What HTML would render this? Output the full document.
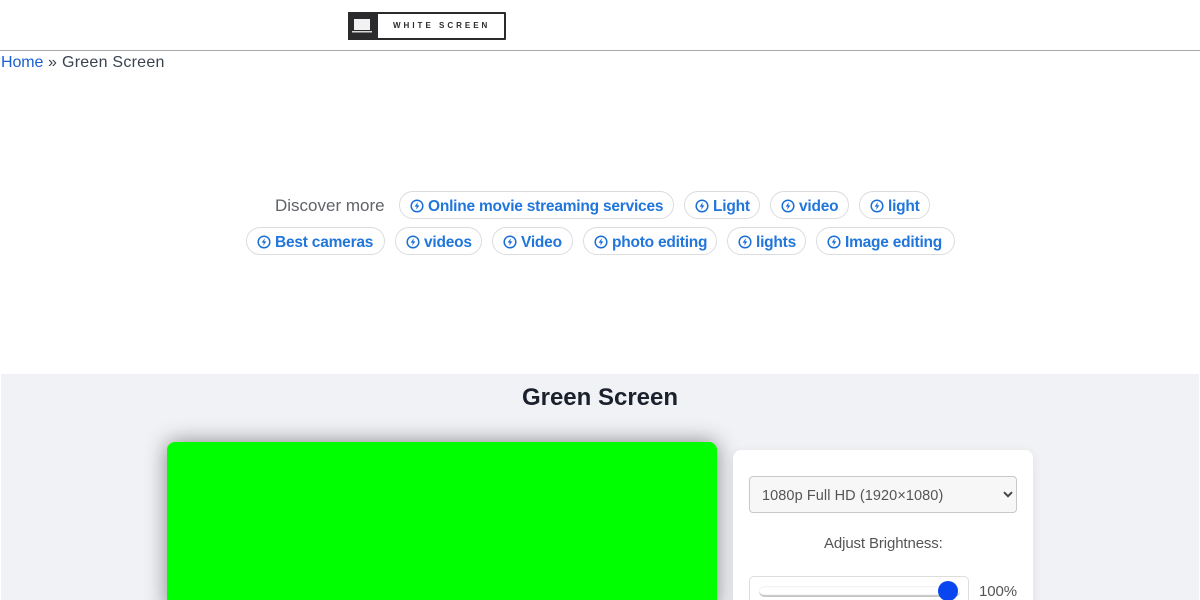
<!DOCTYPE html>
<html lang="en"><head><meta charset="utf-8"><title>Green Screen</title>
<style>
html,body{margin:0;padding:0;width:1200px;height:600px;overflow:hidden;background:#fff}
body{position:relative;font-family:"Liberation Sans",sans-serif;color:#3a4250}
.a{position:absolute;white-space:nowrap}
.chip{position:absolute;height:26px;border:1px solid #dadce0;border-radius:14px;background:#fff;box-sizing:content-box}
.chip svg{position:absolute;left:10px;top:7px}
.chip span{position:absolute;left:28px;top:1px;line-height:27px;font-size:15.5px;font-weight:bold;color:#2176dc;white-space:nowrap;letter-spacing:-.22px}
</style></head><body>
<div class="a" style="left:0;top:50px;width:1200px;height:1px;background:#a9a9a9"></div>
<div class="a" style="left:348px;top:12px;width:158px;height:28px;box-sizing:border-box;border:2px solid #2b2b2d;background:#fff;border-radius:1px"></div>
<div class="a" style="left:348px;top:12px;width:30px;height:28px;background:#2b2b2d"></div>
<svg class="a" style="left:352px;top:18px" width="22" height="17" viewBox="0 0 22 17"><rect x="2" y="1" width="16" height="11" fill="#f2f2f2"/><rect x="0" y="13" width="20" height="1.5" fill="#d8d8d8"/></svg>
<div class="a" style="left:393px;top:20px;font-size:8px;line-height:11px;font-weight:bold;letter-spacing:3px;color:#2b2b2d">WHITE SCREEN</div>
<div class="a" style="left:1px;top:53px;font-size:16px;line-height:20px;color:#1a5fd0;letter-spacing:-.1px">Home</div>
<div class="a" style="left:48px;top:53px;font-size:16px;line-height:20px">»</div>
<div class="a" style="left:62px;top:53px;font-size:16px;line-height:20px;letter-spacing:.25px">Green Screen</div>

<div class="a" style="left:275px;top:196px;font-size:17px;line-height:20px;color:#5f6368">Discover more</div>

<div class="chip" style="left:399px;top:191px;width:273px"><svg width="14" height="14" viewBox="0 0 14 14"><circle cx="7" cy="7" r="5.8" fill="none" stroke="#1a6fd6" stroke-width="1.5"/><path d="M7.8 3.2 4.6 7.6H6.7L6.2 10.8 9.4 6.4H7.3Z" fill="#1a6fd6"/></svg><span>Online movie streaming services</span></div>
<div class="chip" style="left:684px;top:191px;width:74px"><svg width="14" height="14" viewBox="0 0 14 14"><circle cx="7" cy="7" r="5.8" fill="none" stroke="#1a6fd6" stroke-width="1.5"/><path d="M7.8 3.2 4.6 7.6H6.7L6.2 10.8 9.4 6.4H7.3Z" fill="#1a6fd6"/></svg><span>Light</span></div>
<div class="chip" style="left:770px;top:191px;width:77px"><svg width="14" height="14" viewBox="0 0 14 14"><circle cx="7" cy="7" r="5.8" fill="none" stroke="#1a6fd6" stroke-width="1.5"/><path d="M7.8 3.2 4.6 7.6H6.7L6.2 10.8 9.4 6.4H7.3Z" fill="#1a6fd6"/></svg><span>video</span></div>
<div class="chip" style="left:859px;top:191px;width:69px"><svg width="14" height="14" viewBox="0 0 14 14"><circle cx="7" cy="7" r="5.8" fill="none" stroke="#1a6fd6" stroke-width="1.5"/><path d="M7.8 3.2 4.6 7.6H6.7L6.2 10.8 9.4 6.4H7.3Z" fill="#1a6fd6"/></svg><span>light</span></div>

<div class="chip" style="left:246px;top:227px;width:137px"><svg width="14" height="14" viewBox="0 0 14 14"><circle cx="7" cy="7" r="5.8" fill="none" stroke="#1a6fd6" stroke-width="1.5"/><path d="M7.8 3.2 4.6 7.6H6.7L6.2 10.8 9.4 6.4H7.3Z" fill="#1a6fd6"/></svg><span>Best cameras</span></div>
<div class="chip" style="left:395px;top:227px;width:85px"><svg width="14" height="14" viewBox="0 0 14 14"><circle cx="7" cy="7" r="5.8" fill="none" stroke="#1a6fd6" stroke-width="1.5"/><path d="M7.8 3.2 4.6 7.6H6.7L6.2 10.8 9.4 6.4H7.3Z" fill="#1a6fd6"/></svg><span>videos</span></div>
<div class="chip" style="left:492px;top:227px;width:79px"><svg width="14" height="14" viewBox="0 0 14 14"><circle cx="7" cy="7" r="5.8" fill="none" stroke="#1a6fd6" stroke-width="1.5"/><path d="M7.8 3.2 4.6 7.6H6.7L6.2 10.8 9.4 6.4H7.3Z" fill="#1a6fd6"/></svg><span>Video</span></div>
<div class="chip" style="left:583px;top:227px;width:132px"><svg width="14" height="14" viewBox="0 0 14 14"><circle cx="7" cy="7" r="5.8" fill="none" stroke="#1a6fd6" stroke-width="1.5"/><path d="M7.8 3.2 4.6 7.6H6.7L6.2 10.8 9.4 6.4H7.3Z" fill="#1a6fd6"/></svg><span>photo editing</span></div>
<div class="chip" style="left:727px;top:227px;width:77px"><svg width="14" height="14" viewBox="0 0 14 14"><circle cx="7" cy="7" r="5.8" fill="none" stroke="#1a6fd6" stroke-width="1.5"/><path d="M7.8 3.2 4.6 7.6H6.7L6.2 10.8 9.4 6.4H7.3Z" fill="#1a6fd6"/></svg><span>lights</span></div>
<div class="chip" style="left:816px;top:227px;width:137px"><svg width="14" height="14" viewBox="0 0 14 14"><circle cx="7" cy="7" r="5.8" fill="none" stroke="#1a6fd6" stroke-width="1.5"/><path d="M7.8 3.2 4.6 7.6H6.7L6.2 10.8 9.4 6.4H7.3Z" fill="#1a6fd6"/></svg><span>Image editing</span></div>

<div class="a" style="left:1px;top:374px;width:1198px;height:226px;background:#f0f2f5"></div>
<div class="a" style="left:0;top:383px;width:1200px;text-align:center;font-size:24px;line-height:30px;font-weight:bold;color:#1a202c">Green Screen</div>
<div class="a" style="left:167px;top:442px;width:550px;height:170px;background:#0f0;border-radius:8px;box-shadow:0 0 22px rgba(0,0,0,.45)"></div>
<div class="a" style="left:733px;top:450px;width:300px;height:170px;background:#fff;border-radius:8px;box-shadow:0 2px 10px rgba(0,0,0,.08)"></div>
<div class="a" style="left:749px;top:476px;width:268px;height:37px;box-sizing:border-box;border:1px solid #c9c9c9;border-radius:4px;background:#f7f7f7"></div>
<div class="a" style="left:762px;top:486px;font-size:14.5px;line-height:19px;color:#555;letter-spacing:.08px;padding-top:1px">1080p Full HD (1920×1080)</div>
<svg class="a" style="left:1003px;top:491px" width="10" height="7" viewBox="0 0 10 7"><path d="M1 1.2 5 5.2 9 1.2" fill="none" stroke="#444" stroke-width="2"/></svg>
<div class="a" style="left:824px;top:535px;font-size:15px;line-height:18px;color:#555;letter-spacing:-.12px">Adjust Brightness:</div>
<div class="a" style="left:749px;top:576px;width:220px;height:40px;box-sizing:border-box;border:1px solid #ddd;border-radius:5px;background:#fff"></div>
<div class="a" style="left:759px;top:586px;width:201px;height:11px;border-radius:6px;background:#fff;box-shadow:inset 0 -3px 1px -1px #c4c4c4,inset 0 1px 1px #f0f0f0"></div>
<div class="a" style="left:938px;top:581px;width:20px;height:20px;border-radius:50%;background:#0a46f0"></div>
<div class="a" style="left:979px;top:583px;font-size:15px;line-height:18px;color:#555;letter-spacing:-.1px">100%</div>
</body></html>
